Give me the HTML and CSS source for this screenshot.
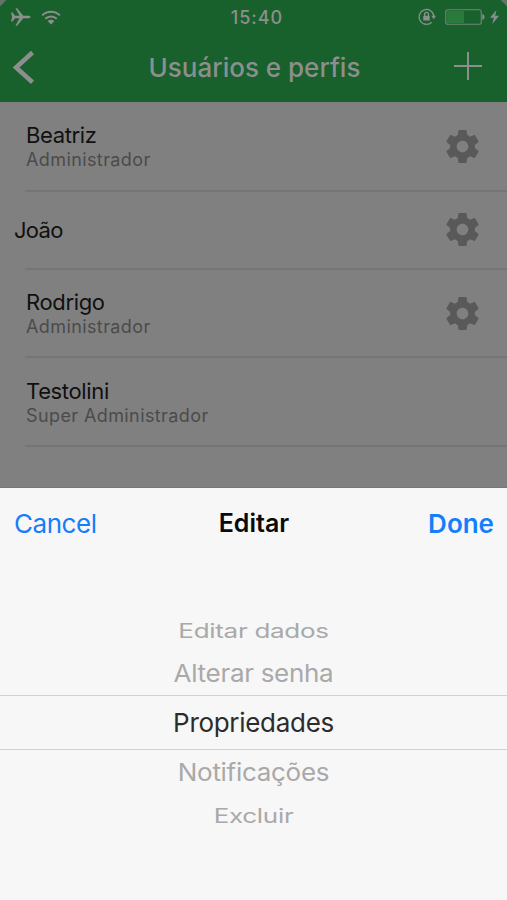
FILE: index.html
```html
<!DOCTYPE html>
<html lang="pt-BR">
<head>
<meta charset="utf-8">
<title>Usuários e perfis</title>
<link rel="stylesheet" href="styles.css">
</head>
<body>
<svg width="0" height="0" class="defs">
  <symbol id="gear" viewBox="2 2 20 20"><path d="M19.43 12.98c.04-.32.07-.64.07-.98s-.03-.66-.07-.98l2.11-1.65c.19-.15.24-.42.12-.64l-2-3.46c-.12-.22-.39-.3-.61-.22l-2.49 1c-.52-.4-1.08-.73-1.69-.98l-.38-2.65C14.46 2.18 14.25 2 14 2h-4c-.25 0-.46.18-.49.42l-.38 2.65c-.61.25-1.17.59-1.69.98l-2.49-1c-.23-.09-.49 0-.61.22l-2 3.46c-.13.22-.07.49.12.64l2.11 1.65c-.04.32-.07.65-.07.98s.03.66.07.98l-2.11 1.65c-.19.15-.24.42-.12.64l2 3.46c.12.22.39.3.61.22l2.49-1c.52.4 1.08.73 1.69.98l.38 2.65c.03.24.24.42.49.42h4c.25 0 .46-.18.49-.42l.38-2.65c.61-.25 1.17-.59 1.69-.98l2.49 1c.23.09.49 0 .61-.22l2-3.46c.12-.22.07-.49-.12-.64l-2.11-1.65zM12 15.5c-1.93 0-3.5-1.57-3.5-3.5s1.57-3.5 3.5-3.5 3.5 1.57 3.5 3.5-1.57 3.5-3.5 3.5z"/></symbol>
</svg>
<main class="phone">
  <header class="header">
    <div class="status">
      <div class="status-left">
        <svg class="plane" width="20" height="18" viewBox="0 0 20 18"><path d="M0 4.500h1.500l2.600 3.200h4.500L4.400.3h1.700L12.300 7.700h4.500c1.600 0 2.800.5 2.800 1.300s-1.200 1.300-2.800 1.300h-4.500L6.100 17.700H4.400l4.200-7.400H4.100L1.500 13.500H0L1.100 9z"/></svg>
        <svg class="wifi" width="20" height="15" viewBox="0 0 20 15"><path class="wave" d="M1.200 5.400a12.500 12.500 0 0 1 17.600 0M4.300 8.700a8.200 8.200 0 0 1 11.400 0"/><path d="M6.700 11.100a4.700 4.700 0 0 1 6.600 0L10 14.500z"/></svg>
      </div>
      <div class="clock"><span>15:40</span></div>
      <div class="status-right">
        <svg width="18" height="18" viewBox="0 0 18 18"><path class="ring" d="M15.900 8.200a7.400 7.400 0 1 0-2.200 6"/><path d="M13.500 7.800h4.500l-2.300 3.400z"/><path d="M5.300 7.800h6.400v4.700H5.300z"/><path class="ring" d="M6.600 8V6.300a1.900 1.900 0 0 1 3.800 0V8"/></svg>
        <svg width="40" height="16" viewBox="0 0 40 16"><rect class="cell" x=".75" y=".75" width="35.500" height="14.500" rx="2"/><rect class="charge" x="2" y="2" width="17" height="12"/><path d="M37.300 5c1.600.5 2.200 1.600 2.200 3s-.6 2.500-2.200 3z"/></svg>
        <svg width="9" height="14" viewBox="0 0 9 14"><path d="M6.500 0L0 7.700h3.800L2.300 14 9 5.700H5.100z"/></svg>
      </div>
    </div>
    <nav class="navbar">
      <svg class="back" width="24" height="36" viewBox="0 0 24 36"><path d="M20.500 2.500L4 17.500l16.500 14.700"/></svg>
      <h1 class="title"><span>Usuários e perfis</span></h1>
      <svg class="add" width="28" height="28" viewBox="0 0 28 28"><path d="M14 0v28M0 14h28"/></svg>
    </nav>
  </header>
  <ul class="users">
    <li class="user tall"><div class="who"><span class="name">Beatriz</span><span class="role">Administrador</span></div><svg class="gear"><use href="#gear"/></svg></li>
    <li class="user plain"><span class="name joao">João</span><svg class="gear"><use href="#gear"/></svg></li>
    <li class="user tall"><div class="who"><span class="name">Rodrigo</span><span class="role">Administrador</span></div><svg class="gear"><use href="#gear"/></svg></li>
    <li class="user tall"><div class="who"><span class="name">Testolini</span><span class="role">Super Administrador</span></div></li>
  </ul>
  <section class="sheet">
    <div class="toolbar"><button class="cancel">Cancel</button><h2>Editar</h2><button class="done">Done</button></div>
    <div class="picker">
      <div class="option far top"><span>Editar dados</span></div>
      <div class="option near upper"><span>Alterar senha</span></div>
      <div class="option selected"><span>Propriedades</span></div>
      <div class="option near lower"><span>Notificações</span></div>
      <div class="option far bottom"><span>Excluir</span></div>
    </div>
  </section>
</main>
</body>
</html>
```
FILE: styles.css
```css
* { box-sizing: border-box; }
body { margin: 0; font-family: Inter, "Liberation Sans", sans-serif; background: #808080; }
h1, h2, ul { margin: 0; padding: 0; }
button { border: 0; padding: 0; background: none; font: inherit; }
svg { flex: none; display: block; }
.defs { position: absolute; }
.phone { width: 507px; height: 900px; overflow: hidden; display: flex; flex-direction: column; }
.header { height: 102px; background: linear-gradient(225deg, #65736a 4px, transparent 5px), linear-gradient(135deg, #65736a 4px, transparent 5px), #18612c; color: #8c8f8d; fill: #8c8f8d; }
.status { height: 34px; display: grid; grid-template-columns: 1fr 60px 1fr; align-items: center; padding: 0 8px 0 11px; }
.status-left { display: flex; align-items: center; gap: 10px; }
.wave, .ring { fill: none; stroke: #8c8f8d; stroke-width: 2; }
.ring { stroke-width: 1.300; }
.clock { font-size: 18px; font-weight: 500; letter-spacing: 1px; text-align: center; white-space: nowrap; padding-left: 4px; }
.status-right { display: flex; justify-content: flex-end; align-items: center; gap: 9px; }
.status-right svg:last-child { margin-left: -4px; }
.cell { fill: none; stroke: #6d8b72; stroke-width: 1.100; }
.charge { fill: #297a3b; }
.navbar { height: 68px; display: grid; grid-template-columns: 60px 1fr 60px; align-items: center; padding: 0 25px 0 12px; }
.back path { fill: none; stroke: #8c8f8d; stroke-width: 4.500; }
.title { font-size: 26px; line-height: 32px; font-weight: 500; text-align: center; white-space: nowrap; padding-left: 15px; }
.add { justify-self: end; margin-top: -4px; }
.add path { stroke: #8c8f8d; stroke-width: 2; }
.users { list-style: none; height: 386px; padding-top: 1px; background: #808080; border-bottom: 1px solid #777; }
.user { display: flex; align-items: center; justify-content: space-between; margin-left: 25px; border-bottom: 2px solid #757575; padding-right: 28px; }
.tall { height: 88.500px; }
.plain { height: 78.300px; }
.who { display: flex; flex-direction: column; padding: 1px 0 0 1px; }
.name { font-size: 22px; line-height: 26px; letter-spacing: -.35px; color: #101010; white-space: nowrap; }
.role { font-size: 18px; line-height: 23px; letter-spacing: .4px; color: #4b4b4b; white-space: nowrap; }
.joao { margin-left: -11px; letter-spacing: -.7px; padding-top: 1px; }
.gear { width: 33px; height: 33px; fill: #595959; }
.sheet { height: 412px; background: #f7f7f7; }
.toolbar { height: 70px; display: grid; grid-template-columns: 120px 1fr 120px; align-items: center; padding: 0 13px 0 14px; font-size: 26px; color: #147efb; }
.toolbar h2 { font-size: 25px; font-weight: 600; color: #0a0a0a; text-align: center; }
.cancel { text-align: left; color: inherit; letter-spacing: -.45px; }
.done { text-align: right; color: inherit; font-weight: 600; }
.picker { padding-top: 50px; }
.option { display: flex; justify-content: center; align-items: center; font-size: 26px; letter-spacing: -.3px; white-space: nowrap; color: #a9a9a9; }
.option span { display: block; }
.far { height: 43px; }
.near { height: 44px; }
.selected { height: 55px; border-top: 1px solid #d2d2d2; border-bottom: 1px solid #d2d2d2; color: #2c2c2c; }
.top span { transform: translateY(1px) scaleY(.75); }
.bottom span { transform: scaleY(.75); }
.upper span, .lower span { transform: scaleY(.93); }
```
